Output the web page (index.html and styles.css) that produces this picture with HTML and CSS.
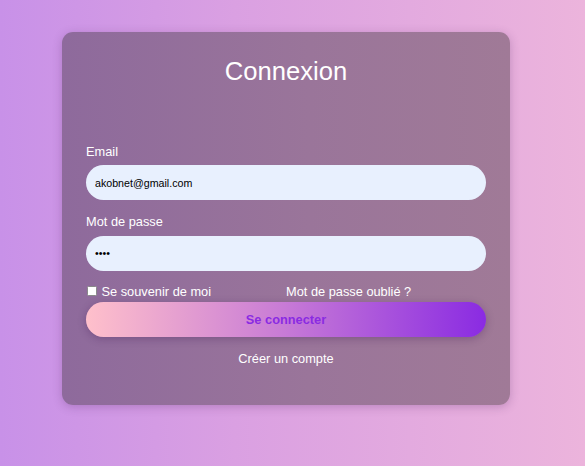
FILE: index.html
```html
<!DOCTYPE html>
<html lang="fr">
<head>
<meta charset="utf-8">
<title>Connexion</title>
<link rel="stylesheet" href="styles.css">
</head>
<body>
<div class="page">
  <form class="card">
    <h2 class="title">Connexion</h2>
    <label class="label" for="email">Email</label>
    <input class="field" id="email" type="text" value="akobnet@gmail.com">
    <label class="label label-gap" for="pw">Mot de passe</label>
    <input class="field" id="pw" type="password" value="abcd">
    <div class="options">
      <label class="remember"><span class="box"></span>Se souvenir de moi</label>
      <a class="forgot" href="#">Mot de passe oublié ?</a>
    </div>
    <button class="submit" type="button">Se connecter</button>
    <a class="create" href="#">Créer un compte</a>
  </form>
</div>
</body>
</html>
```
FILE: styles.css
```css
html, body {
  margin: 0;
  padding: 0;
  height: 100%;
}
body {
  background: linear-gradient(90deg, #c891e8 0%, #daa0e2 40%, #ecb4dc 100%);
  font-family: "Liberation Sans", Arial, sans-serif;
  font-size: 12.8px;
  color: #fff;
}
.page {
  padding: 32px 0 0 62px;
}
.card {
  width: 448px;
  height: 373px;
  box-sizing: border-box;
  padding: 24px 24px 0;
  border-radius: 11px;
  background: linear-gradient(90deg, #8e6a9c 0%, #9a759a 55%, #a07a97 100%);
  box-shadow: 0 2px 10px rgba(70, 30, 90, 0.25);
  display: flex;
  flex-direction: column;
}
.title {
  margin: 0;
  font-weight: normal;
  font-size: 25.6px;
  line-height: 30px;
  text-align: center;
  color: #fff;
}
.label {
  display: block;
  margin-top: 57.5px;
  font-size: 12.8px;
  line-height: 16px;
  color: #fff;
}
.label-gap {
  margin-top: 14px;
}
.field {
  margin-top: 5.5px;
  height: 35px;
  width: 400px;
  box-sizing: border-box;
  border: none;
  border-radius: 18px;
  background: #e8f0fe;
  padding: 0 9px;
  font-family: "Liberation Sans", Arial, sans-serif;
  font-size: 10.67px;
  color: #000;
  outline: none;
}
.options {
  display: flex;
  margin-top: 13px;
  line-height: 16px;
}
.remember, .forgot {
  flex: 1;
  color: #fff;
  text-decoration: none;
  display: flex;
  align-items: center;
}
.box {
  width: 8px;
  height: 8px;
  background: #fff;
  border: 0.5px solid #8a8a8a;
  border-radius: 1.5px;
  margin: 0 5px 1px 0.5px;
  flex: none;
}
.submit {
  margin-top: 2px;
  height: 35px;
  width: 400px;
  border: none;
  border-radius: 18px;
  background: linear-gradient(90deg, #ffc0cb 0%, #c77ad6 50%, #8a2be2 100%);
  box-shadow: 0 2px 8px rgba(60, 20, 80, 0.3);
  font-family: "Liberation Sans", Arial, sans-serif;
  font-size: 12.8px;
  font-weight: bold;
  color: #8a2be2;
  padding: 0;
}
.create {
  margin-top: 14px;
  line-height: 16px;
  text-align: center;
  color: #fff;
  text-decoration: none;
}
```
